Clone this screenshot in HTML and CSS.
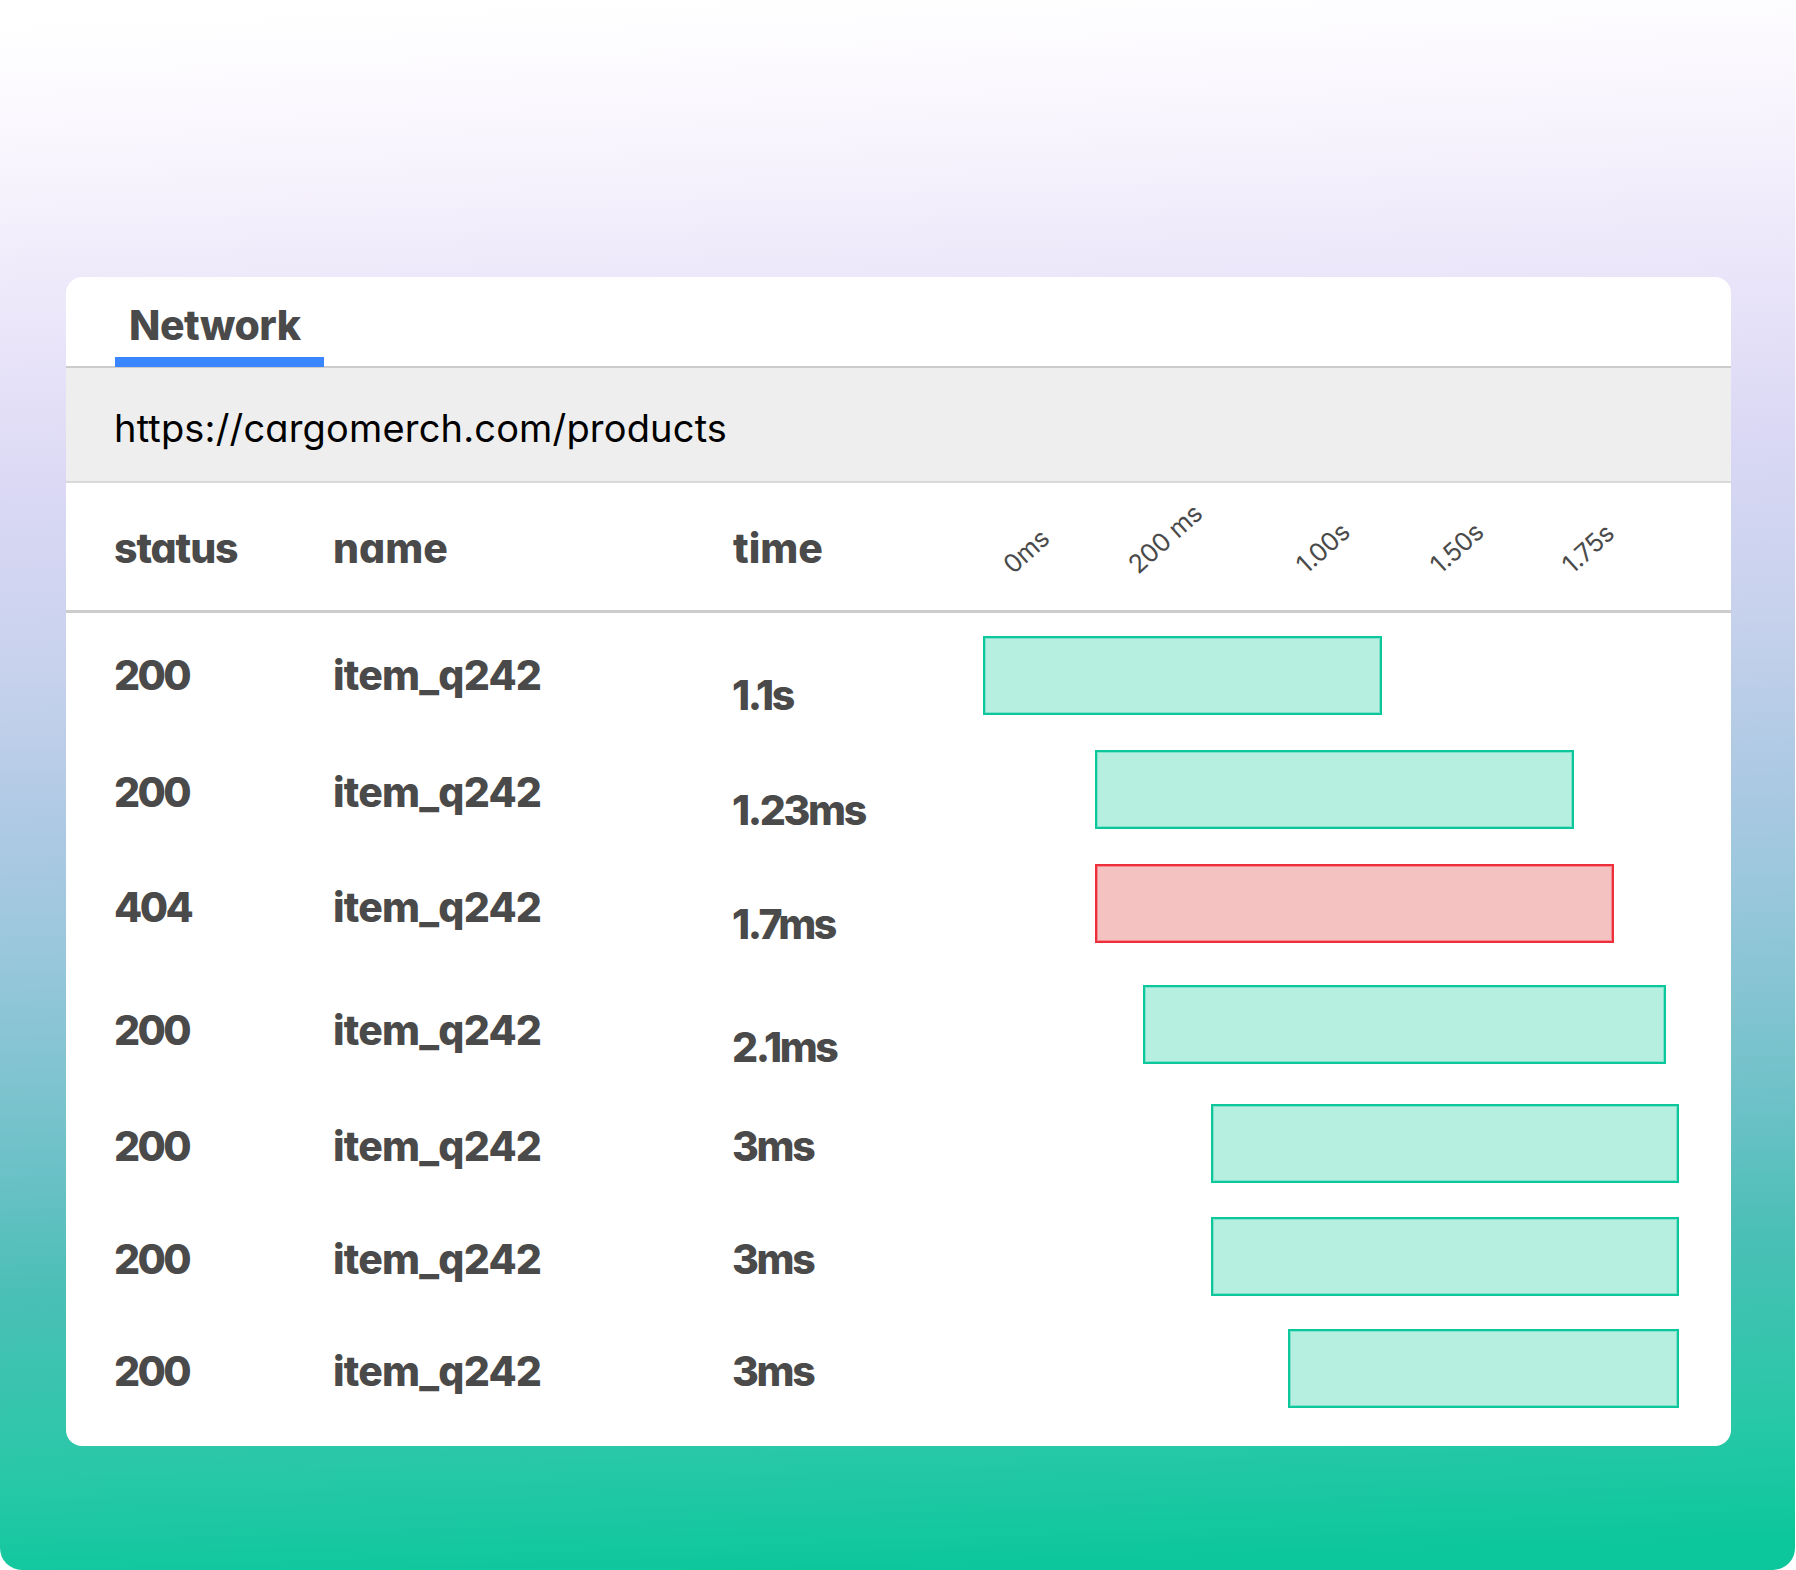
FILE: index.html
```html
<!DOCTYPE html>
<html lang="en">
<head>
<meta charset="utf-8">
<title>Network</title>
<link rel="stylesheet" href="styles.css">
</head>
<body>
<main class="stage">
  <section class="panel">
    <nav class="tabs"><div class="tab">Network</div></nav>
    <div class="url">https://cargomerch.com/products</div>
    <div class="head">
      <div class="col-status">status</div>
      <div class="col-name">name</div>
      <div class="col-time">time</div>
      <div class="axis">
        <span class="tick t0">0ms</span>
        <span class="tick t1">200 ms</span>
        <span class="tick t2">1.00s</span>
        <span class="tick t3">1.50s</span>
        <span class="tick t4">1.75s</span>
      </div>
    </div>
    <div class="rows">
      <div class="row r1"><div class="col-status">200</div><div class="col-name">item_q242</div><div class="col-time">1.1s</div><div class="track"><div class="bar ok" style="margin-left:0;width:399px"></div></div></div>
      <div class="row r2"><div class="col-status">200</div><div class="col-name">item_q242</div><div class="col-time">1.23ms</div><div class="track"><div class="bar ok" style="margin-left:112px;width:479px"></div></div></div>
      <div class="row r3"><div class="col-status">404</div><div class="col-name">item_q242</div><div class="col-time">1.7ms</div><div class="track"><div class="bar err" style="margin-left:112px;width:519px"></div></div></div>
      <div class="row r4"><div class="col-status">200</div><div class="col-name">item_q242</div><div class="col-time">2.1ms</div><div class="track"><div class="bar ok" style="margin-left:160px;width:523px"></div></div></div>
      <div class="row r5"><div class="col-status">200</div><div class="col-name">item_q242</div><div class="col-time">3ms</div><div class="track"><div class="bar ok" style="margin-left:228px;width:468px"></div></div></div>
      <div class="row r6"><div class="col-status">200</div><div class="col-name">item_q242</div><div class="col-time">3ms</div><div class="track"><div class="bar ok" style="margin-left:228px;width:468px"></div></div></div>
      <div class="row r7"><div class="col-status">200</div><div class="col-name">item_q242</div><div class="col-time">3ms</div><div class="track"><div class="bar ok" style="margin-left:305px;width:391px"></div></div></div>
    </div>
  </section>
</main>
</body>
</html>
```
FILE: styles.css
```css
* { box-sizing: border-box; }
html, body { margin: 0; padding: 0; background: #fff; }
body {
  width: 1796px;
  height: 1570px;
  overflow: hidden;
  font-family: Inter, "Liberation Sans", sans-serif;
  font-feature-settings: "cv11" 1;
  color: #4a4a4a;
}
.stage {
  width: 1795px;
  height: 1570px;
  padding: 277px 0 0 66px;
  border-radius: 0 0 22px 22px;
  background: linear-gradient(178deg,
    #ffffff 20px,
    #f8f4fd 170px,
    #ebe6f9 320px,
    #dcd9f5 480px,
    #c6d1ec 680px,
    #adc9e3 833px,
    #9ac7dc 947px,
    #83c4d1 1062px,
    #6ac1c6 1176px,
    #4bbfb6 1291px,
    #28c8a8 1477px,
    #0cc79b 1600px);
}
.panel {
  width: 1665px;
  height: 1169px;
  background: #fff;
  border-radius: 16px;
  overflow: hidden;
}
.tabs {
  height: 91px;
  padding-left: 49px;
  border-bottom: 2px solid #cccccc;
}
.tab {
  width: 209px;
  height: 90px;
  padding: 23px 0 0 14px;
  border-bottom: 10px solid #3a86ff;
  font-size: 41px;
  line-height: 50px;
  font-weight: 800;
  letter-spacing: -0.5px;
}
.url {
  height: 115px;
  padding: 0 0 0 48px;
  background: #eeeeee;
  border-bottom: 2px solid #d9d9d9;
  color: #000;
  font-size: 38px;
  line-height: 121px;
  letter-spacing: 0.17px;
}
.head {
  display: grid;
  grid-template-columns: 218px 400px 250px 1fr;
  height: 130px;
  padding-left: 48px;
  border-bottom: 3px solid #cccccc;
  font-size: 41px;
  font-weight: 800;
  line-height: 131px;
}
.head .col-status { letter-spacing: -1.1px; }
.head .col-name { margin-left: 1px; letter-spacing: 0; }
.head .col-time { margin-left: 1px; letter-spacing: 0; }
.axis { display: flex; align-items: flex-end; height: 95px; margin-left: 1px; }
.tick {
  display: block;
  font-size: 25.5px;
  line-height: 26px;
  font-weight: 400;
  letter-spacing: -0.4px;
  white-space: nowrap;
  transform-origin: 0 100%;
  transform: rotate(-42deg);
}
.t0 { margin-left: 33px; width: 125px; }
.t1 { width: 168px; }
.t2 { width: 134px; }
.t3 { width: 132px; }
.t4 { width: 60px; }
.rows { padding-top: 23px; }
.row {
  display: grid;
  grid-template-columns: 218px 400px 250px 1fr;
  height: 80px;
  padding-left: 48px;
  font-size: 41px;
  font-weight: 800;
  line-height: 80px;
  margin-bottom: var(--gap);
}
.row > .col-status { letter-spacing: -2.6px; margin-top: var(--text); }
.row > .col-name { letter-spacing: -0.8px; margin-top: var(--text); margin-left: 1px; }
.row > .col-time { letter-spacing: -2.4px; margin-top: var(--time); }
.track { margin-left: 1px; }
.r1 { --gap: 34px; --text: -1px; --time: 19px; }
.r2 { --gap: 34px; --text: 2px; --time: 20px; }
.r3 { --gap: 41px; --text: 3px; --time: 20px; }
.r4 { --gap: 39px; --text: 5px; --time: 22px; }
.r5 { --gap: 33px; --text: 2px; --time: 2px; }
.r6 { --gap: 32px; --text: 2px; --time: 2px; }
.r7 { --gap: 0px; --text: 2px; --time: 2px; }
.bar { height: 79px; border: 2px solid; }
.ok { background: #b6eee0; border-color: #0cc79b; box-shadow: inset 0 0 0 1px #7fe2ca; }
.err { background: #f5c2c2; border-color: #ee2e3a; box-shadow: inset 0 0 0 1px #f28a8f; }
```
